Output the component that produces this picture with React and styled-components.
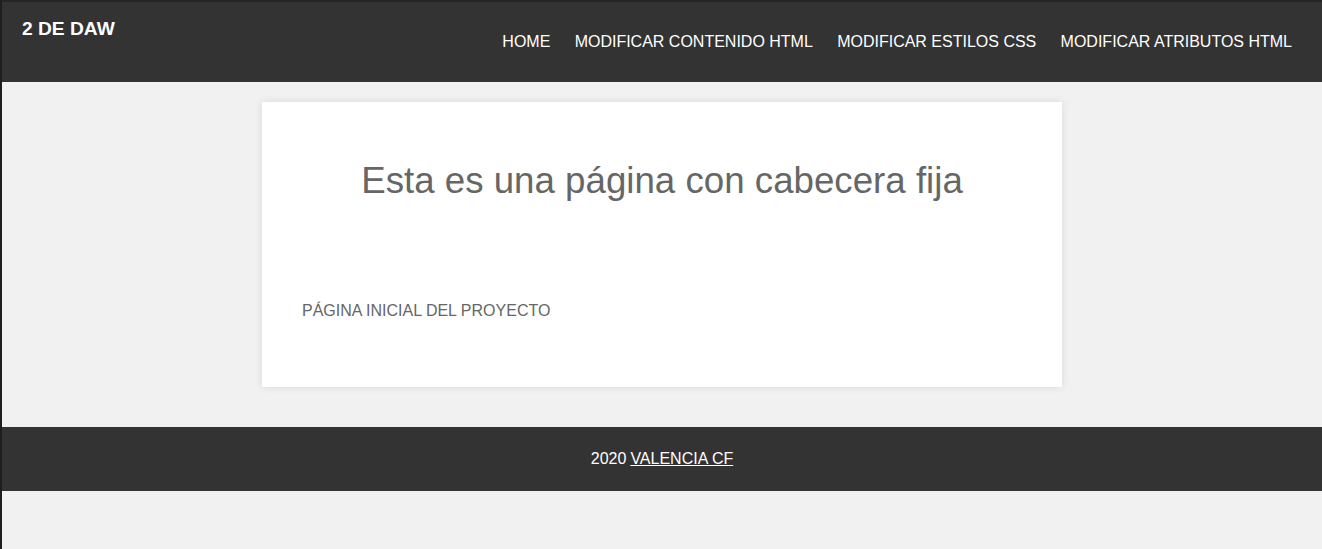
import styled, { createGlobalStyle } from 'styled-components';

const GlobalStyle = createGlobalStyle`
  html, body {
    margin: 0;
    padding: 0;
    background: #f1f1f1;
    font-family: "Liberation Sans", Arial, sans-serif;
  }
`;

const Frame = styled.div`
  min-height: 549px;
  box-sizing: border-box;
  border-left: 2px solid #1e1e1e;
  background: #f1f1f1;
`;

const Header = styled.header`
  height: 82px;
  box-sizing: border-box;
  background: #333;
  border-top: 2px solid #252525;
  padding: 16px 30px 0 20px;
  display: flex;
  justify-content: space-between;
  align-items: flex-start;
`;

const Logo = styled.a`
  color: #fff;
  font-size: 19.2px;
  font-weight: bold;
  line-height: 22px;
  text-decoration: none;
`;

const NavLinks = styled.nav`
  display: flex;
  gap: 24.3px;
  margin-top: 14px;
`;

const NavLink = styled.a`
  color: #fff;
  font-size: 16px;
  line-height: 20px;
  text-decoration: none;
  text-transform: uppercase;
`;

const Main = styled.main`
  padding: 20px 0 40px;
  display: flex;
  justify-content: center;
`;

const Card = styled.section`
  width: 800px;
  height: 285px;
  box-sizing: border-box;
  background: #fff;
  box-shadow: 0 0 8px rgba(0, 0, 0, 0.1);
  padding: 57px 40px 0;
  color: #666;
`;

const Title = styled.h1`
  margin: 0 0 100px;
  font-size: 36.7px;
  font-weight: normal;
  line-height: 43px;
  text-align: center;
`;

const Intro = styled.p`
  margin: 0;
  font-size: 16px;
  line-height: 18px;
  text-transform: uppercase;
`;

const Footer = styled.footer`
  height: 64px;
  background: #333;
  color: #fff;
  font-size: 16px;
  display: flex;
  align-items: center;
  justify-content: center;
`;

const FooterLink = styled.a`
  color: #fff;
  text-decoration: underline;
  margin-left: 4px;
`;

export default function App() {
  const links = ['Home', 'Modificar contenido HTML', 'Modificar estilos CSS', 'Modificar atributos HTML'];

  return (
    <Frame>
      <GlobalStyle />
      <Header>
        <Logo href="#">2 DE DAW</Logo>
        <NavLinks>
          {links.map((l) => (
            <NavLink key={l} href="#">{l}</NavLink>
          ))}
        </NavLinks>
      </Header>
      <Main>
        <Card>
          <Title>Esta es una página con cabecera fija</Title>
          <Intro>Página inicial del proyecto</Intro>
        </Card>
      </Main>
      <Footer>
        2020<FooterLink href="#">VALENCIA CF</FooterLink>
      </Footer>
    </Frame>
  );
}
